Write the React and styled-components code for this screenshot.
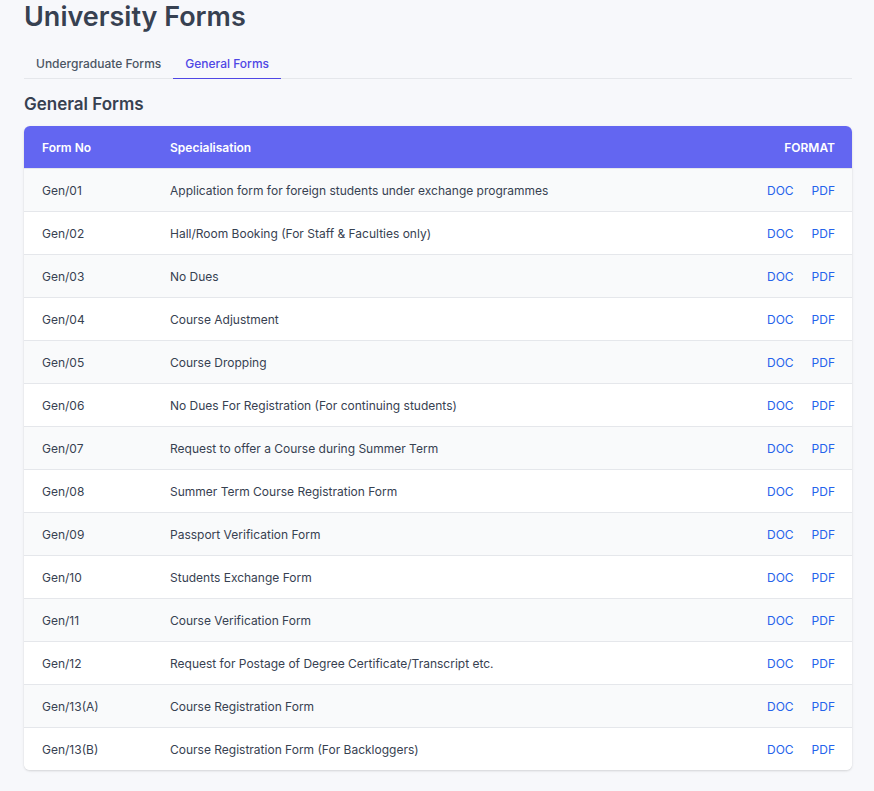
import styled, { createGlobalStyle } from 'styled-components';

const Global = createGlobalStyle`
  body { margin: 0; background: #f7f8fb; font-family: Inter, "Noto Sans", sans-serif; }
`;

const Page = styled.div`
  padding: 0 22px 20px 24px;
`;
const Title = styled.h1`
  margin: 0; font-size: 27px; font-weight: 600; color: #374151; line-height: 34px;
`;
const Tabs = styled.div`
  display: flex; margin-top: 13px; border-bottom: 1px solid #e5e7eb;
`;
const Tab = styled.div`
  padding: 9px 12px 7px; font-size: 12px; font-weight: 500;
  color: ${p => p.active ? '#4f46e5' : '#4b5563'};
  border-bottom: 1px solid ${p => p.active ? '#4f46e5' : 'transparent'};
  margin-bottom: -1px;
`;
const Heading = styled.h2`
  margin: 15px 0 12px; font-size: 17px; font-weight: 600; color: #374151;
`;
const Card = styled.div`
  border-radius: 6px; overflow: hidden; background: #fff;
  box-shadow: 0 1px 3px rgba(0,0,0,0.1), 0 1px 2px rgba(0,0,0,0.06);
`;
const Row = styled.div`
  display: grid; grid-template-columns: 128px 1fr auto; align-items: center;
  height: ${p => p.head ? 42 : 42}px; padding: 0 17px 0 18px; font-size: 12px;
  color: ${p => p.head ? '#fff' : '#374151'};
  font-weight: ${p => p.head ? 600 : 400};
  background: ${p => p.head ? '#6366f1' : p.odd ? '#f9fafb' : '#fff'};
  border-top: ${p => p.head ? 'none' : '1px solid #e5e7eb'};
`;
const Links = styled.div`
  display: flex; gap: 18px;
`;
const Link = styled.a`
  color: #2563eb; text-decoration: none;
`;

const forms = [
  ['Gen/01', 'Application form for foreign students under exchange programmes'],
  ['Gen/02', 'Hall/Room Booking (For Staff & Faculties only)'],
  ['Gen/03', 'No Dues'],
  ['Gen/04', 'Course Adjustment'],
  ['Gen/05', 'Course Dropping'],
  ['Gen/06', 'No Dues For Registration (For continuing students)'],
  ['Gen/07', 'Request to offer a Course during Summer Term'],
  ['Gen/08', 'Summer Term Course Registration Form'],
  ['Gen/09', 'Passport Verification Form'],
  ['Gen/10', 'Students Exchange Form'],
  ['Gen/11', 'Course Verification Form'],
  ['Gen/12', 'Request for Postage of Degree Certificate/Transcript etc.'],
  ['Gen/13(A)', 'Course Registration Form'],
  ['Gen/13(B)', 'Course Registration Form (For Backloggers)'],
];

export default function App() {
  return (
    <Page>
      <Global />
      <Title>University Forms</Title>
      <Tabs>
        <Tab>Undergraduate Forms</Tab>
        <Tab active>General Forms</Tab>
      </Tabs>
      <Heading>General Forms</Heading>
      <Card>
        <Row head>
          <span>Form No</span><span>Specialisation</span><span>FORMAT</span>
        </Row>
        {forms.map(([no, name], i) => (
          <Row key={no} odd={i % 2 === 0}>
            <span>{no}</span><span>{name}</span>
            <Links><Link href="#">DOC</Link><Link href="#">PDF</Link></Links>
          </Row>
        ))}
      </Card>
    </Page>
  );
}
